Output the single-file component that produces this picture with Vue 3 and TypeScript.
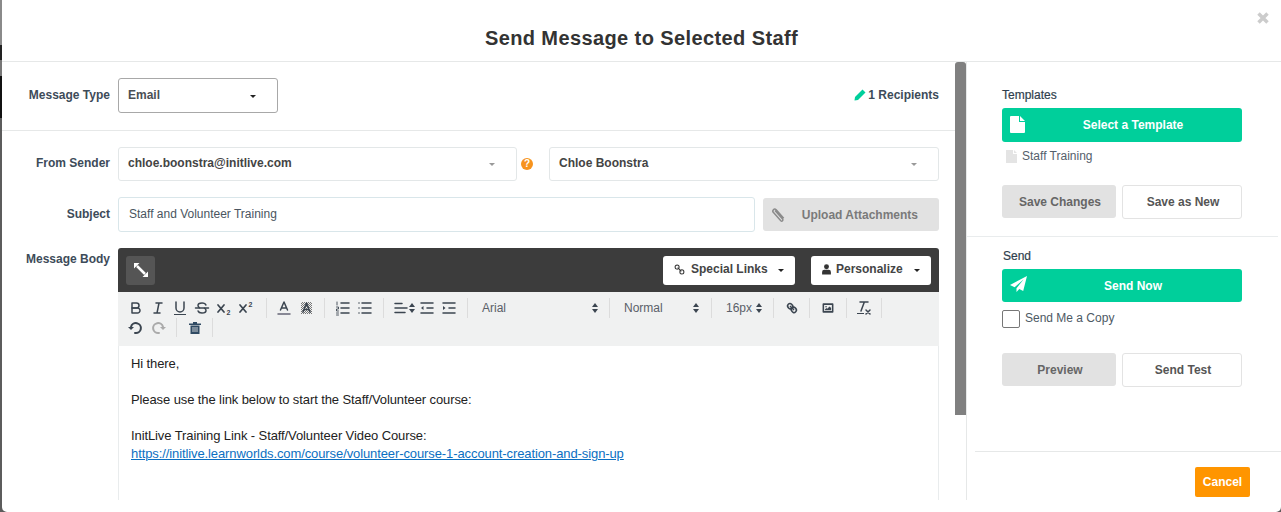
<script setup lang="ts">
const title = 'Send Message to Selected Staff'
const link = 'https://initlive.learnworlds.com/course/volunteer-course-1-account-creation-and-sign-up'
</script>

<template>
  <div class="page">
    <div class="modal">
      <header class="head">
        <h1>{{ title }}</h1>
        <svg class="close" viewBox="0 0 12 12"><path d="M1.5 1.5l9 9M10.5 1.5l-9 9" /></svg>
      </header>
      <div class="main">
        <section class="left">
          <div class="type-row">
            <label class="lab">Message Type</label>
            <div class="sel type-sel"><span>Email</span><i class="caret dark"></i></div>
            <div class="recips">
              <svg viewBox="0 0 12 12" width="12" height="12"><path fill="#00cf9b" d="M8.500.5l3 3L4 11l-3.500.5L1 8z" /></svg>
              <span>1 Recipients</span>
            </div>
          </div>
          <div class="fields">
            <div class="row">
              <label class="lab">From Sender</label>
              <div class="sel from"><span>chloe.boonstra@initlive.com</span><i class="caret"></i></div>
              <span class="help">?</span>
              <div class="sel name"><span>Chloe Boonstra</span><i class="caret"></i></div>
            </div>
            <div class="row subj">
              <label class="lab">Subject</label>
              <div class="subject-input">Staff and Volunteer Training</div>
              <button class="upload">
                <svg viewBox="0 0 16 16" width="16" height="16"><path d="M4 3.500l7.600 8.600c1 1.200-.6 2.800-1.800 1.700L2.500 5.600C.6 3.400 3.200.9 5.200 2.800l7.500 8.400" fill="none" stroke="#8b8b8b" stroke-width="1.500" /></svg>
                <span>Upload Attachments</span>
              </button>
            </div>
            <div class="row body-row">
              <label class="lab">Message Body</label>
              <div class="editor">
                <div class="darkbar">
                  <button class="expand">
                    <svg viewBox="0 0 16 16" width="16" height="16"><path d="M4 4l8 8" stroke="#fff" stroke-width="2.500" /><path d="M1 1h5.500L1 6.500zM15 15H9.500L15 9.500z" fill="#fff" /></svg>
                  </button>
                  <span class="grow"></span>
                  <button class="pill links">
                    <svg viewBox="0 0 12 12" width="11" height="11"><g fill="none" stroke="#333" stroke-width="1.100"><circle cx="3.400" cy="3.400" r="2.200" /><circle cx="8.600" cy="8.600" r="2.200" /><path d="M4 4l4 4" /></g></svg>
                    <span>Special Links</span><i class="caret dark"></i>
                  </button>
                  <button class="pill person">
                    <svg viewBox="0 0 12 12" width="11" height="11"><circle cx="6" cy="3" r="2.700" fill="#333" /><path d="M1.200 11.500V8.600Q1.200 6.200 3.600 6.200h4.800q2.400 0 2.400 2.400v2.900z" fill="#333" /></svg>
                    <span>Personalize</span><i class="caret dark"></i>
                  </button>
                </div>
                <div class="toolbar">
                  <div class="tb-row r1">
                    <div class="grp g1">
                      <span class="b"><svg viewBox="0 0 18 18"><path class="st" d="M5,4H9.500A2.500,2.500,0,0,1,12,6.500v0A2.500,2.500,0,0,1,9.500,9H5V4Z" /><path class="st" d="M5,9h5.500A2.500,2.500,0,0,1,13,11.500v0A2.500,2.500,0,0,1,10.500,14H5V9Z" /></svg></span>
                      <span class="b"><svg viewBox="0 0 18 18"><path class="st" d="M7 4h6M5 14h6M8 14l2-10" /></svg></span>
                      <span class="b"><svg viewBox="0 0 18 18"><path class="st" d="M5,3V9a4,4,0,0,0,8,0V3" /><rect class="fl" height="1" width="12" x="3" y="15" /></svg></span>
                      <span class="b"><svg viewBox="0 0 18 18"><path class="st" d="M15.500 9h-13" /><path class="st" d="M12.900 6C12.500 4.800 11 4 9 4 6.800 4 5 5 5 6.500c0 1 .6 1.700 1.500 2.300M5.100 12c.4 1.200 1.900 2 3.900 2 2.200 0 4-1 4-2.500 0-1-.6-1.700-1.500-2.300" /></svg></span>
                      <span class="b"><svg viewBox="0 0 18 18"><path class="st x" d="M3 6l6 7M9 6l-6 7" /><text x="11.500" y="15.500" class="sc">2</text></svg></span>
                      <span class="b"><svg viewBox="0 0 18 18"><path class="st x" d="M3 6l6 7M9 6l-6 7" /><text x="11.500" y="8" class="sc">2</text></svg></span>
                    </div>
                    <div class="grp g2">
                      <span class="b"><svg viewBox="0 0 18 18"><path class="st" d="M5.500 11L9 3l3.500 8M6.400 9h5.200" /><path class="st und" d="M3 15h12" /></svg></span>
                      <span class="b"><svg viewBox="0 0 18 18"><defs><pattern id="hatch" width="2" height="2" patternUnits="userSpaceOnUse"><rect width="1" height="1" fill="#777" /><rect x="1" y="1" width="1" height="1" fill="#777" /></pattern></defs><rect x="4" y="3" width="11" height="12" fill="url(#hatch)" /><path class="st" d="M6 13l3.500-9 3.500 9M7 10.500h5" /></svg></span>
                    </div>
                    <div class="grp g3">
                      <span class="b"><svg viewBox="0 0 18 18"><path class="st" d="M7 4h8M7 9h8M7 14h8" /><path class="st thin" d="M3 3v3M2.500 8h2v2h-2v2h2M2.500 14h2M2.500 16h2" /></svg></span>
                      <span class="b"><svg viewBox="0 0 18 18"><path class="st" d="M6 4h9M6 9h9M6 14h9M3 4h.01M3 9h.01M3 14h.01" /></svg></span>
                    </div>
                    <div class="grp g4">
                      <span class="al"><svg viewBox="0 0 14 18" width="14" height="18"><path class="st" d="M1 4.500h7M1 9h12M1 13.500h10" /></svg><svg class="updown" viewBox="0 0 6 10"><path d="M3 0l3 4H0zM3 10L0 6h6z" /></svg></span>
                      <span class="b"><svg viewBox="0 0 18 18"><path class="st" d="M3 14h12M3 4h12M9 9h6" /><path class="fl" d="M5.500 7v4L3 9z" /></svg></span>
                      <span class="b"><svg viewBox="0 0 18 18"><path class="st" d="M3 14h12M3 4h12M9 9h6" /><path class="fl" d="M3 7v4l2.500-2z" /></svg></span>
                    </div>
                    <div class="grp g5 drop"><span>Arial</span><svg class="updown" viewBox="0 0 6 10"><path d="M3 0l3 4H0zM3 10L0 6h6z" /></svg></div>
                    <div class="grp g6 drop"><span>Normal</span><svg class="updown" viewBox="0 0 6 10"><path d="M3 0l3 4H0zM3 10L0 6h6z" /></svg></div>
                    <div class="grp g7 drop"><span>16px</span><svg class="updown" viewBox="0 0 6 10"><path d="M3 0l3 4H0zM3 10L0 6h6z" /></svg></div>
                    <div class="grp g8">
                      <span class="b small"><svg viewBox="0 0 18 18"><path class="st heavy" d="M7 7l4 4" /><path class="st heavy" d="M8.900,4.577a3.476,3.476,0,0,1,.36,4.679A3.476,3.476,0,0,1,4.577,8.900C3.185,7.500,2.035,6.400,4.217,4.217S7.500,3.185,8.900,4.577Z" /><path class="st heavy" d="M13.423,9.100a3.476,3.476,0,0,0-4.679-.36,3.476,3.476,0,0,0,.36,4.679c1.392,1.392,2.500,2.542,4.679.36S14.815,10.500,13.423,9.100Z" /></svg></span>
                    </div>
                    <div class="grp g9">
                      <span class="b small"><svg viewBox="0 0 18 18"><rect class="st heavy" height="10" width="12" x="3" y="4" /><circle class="fl" cx="6.500" cy="7.500" r="1" /><path class="fl" d="M5 12v-1l2-2 1 1 3-3 2 2v3z" /></svg></span>
                    </div>
                    <div class="grp g10">
                      <span class="b"><svg viewBox="0 0 18 18"><path class="st" d="M5 3h8M6 12l3.350-9M11 11l4 4M15 11l-4 4" /><rect class="fl" height="1" width="7" x="2" y="14" /></svg></span>
                    </div>
                  </div>
                  <div class="tb-row r2">
                    <div class="grp g11">
                      <span class="b"><svg viewBox="0 0 18 18"><path class="fl" d="M7 10L4 13 1 10z" transform="translate(0 -2)" /><path class="st heavy" d="M8 14a5 5 0 1 0-4-6" /></svg></span>
                      <span class="b off"><svg viewBox="0 0 18 18"><path class="fl" d="M11 8l3 3 3-3z" /><path class="st heavy" d="M10 14a5 5 0 1 1 4-6" /></svg></span>
                    </div>
                    <div class="grp g12">
                      <span class="b"><svg viewBox="0 0 18 18"><path d="M3 4.500h12v1.500H3zM7 3h4v1.500H7zM4.500 6.500h9V15h-9z" fill="#2f4a63" /><path d="M7 8v5M9 8v5M11 8v5" stroke="#efefef" stroke-width=".8" /></svg></span>
                    </div>
                  </div>
                </div>
                <div class="content">
                  <p>Hi there,</p>
                  <p><br /></p>
                  <p>Please use the link below to start the Staff/Volunteer course:</p>
                  <p><br /></p>
                  <p>InitLive Training Link - Staff/Volunteer Video Course:</p>
                  <p><a href="#">{{ link }}</a></p>
                </div>
              </div>
            </div>
          </div>
        </section>
        <div class="rail"><div class="thumb"></div></div>
        <aside class="right">
          <div class="block tpl">
            <h2>Templates</h2>
            <button class="green">
              <svg class="ficon" viewBox="0 0 15 17" width="15" height="17"><path d="M0 1q0-1 1-1h8v6h6v10q0 1-1 1H1q-1 0-1-1z M10 0l5 5h-5z" fill="#fff" /></svg>
              <span>Select a Template</span>
            </button>
            <div class="tpl-item">
              <svg viewBox="0 0 11 13" width="11" height="13"><path d="M0 0h7v4h4v9H0zM8 0l3 3H8z" fill="#e4e4e4" /></svg>
              <span>Staff Training</span>
            </div>
            <div class="btns">
              <button class="grey">Save Changes</button>
              <button class="ghost">Save as New</button>
            </div>
          </div>
          <div class="block send">
            <h2>Send</h2>
            <button class="green">
              <svg class="ficon plane" viewBox="0 0 17 16" width="17" height="16"><path d="M17 0L0 9l4.600 2.200L13.500 3.500 6.500 12.200V16l2.800-3 3.900 1.900z" fill="#fff" /></svg>
              <span>Send Now</span>
            </button>
            <div class="check"><span class="box"></span><span class="check-text">Send Me a Copy</span></div>
            <div class="btns">
              <button class="grey">Preview</button>
              <button class="ghost">Send Test</button>
            </div>
          </div>
          <footer class="foot"><button class="cancel">Cancel</button></footer>
        </aside>
      </div>
    </div>
  </div>
</template>

<style scoped>
.page {
  width: 1281px;
  height: 512px;
  overflow: hidden;
  padding-left: 2px;
  box-sizing: border-box;
  font-family: "Liberation Sans", Arial, sans-serif;
  background: linear-gradient(to bottom, #8a8a8a 0 45px, #222 45px 60px, #777 60px 76px, #111 76px 118px, #5c5c5c 118px 512px);
}
.modal {
  height: 512px;
  background: #fff;
  border-radius: 0 0 5px 5px;
  display: flex;
  flex-direction: column;
  overflow: hidden;
}
.head {
  height: 62px;
  box-sizing: border-box;
  flex: none;
  border-bottom: 1px solid #e6e8e8;
  display: flex;
  align-items: center;
  justify-content: center;
  position: relative;
}
h1 {
  margin: 15px 0 0 0;
  font-size: 20px;
  line-height: 24px;
  font-weight: 700;
  color: #333;
  letter-spacing: 0.4px;
}
.close {
  position: absolute;
  right: 12px;
  top: 12px;
  width: 12px;
  height: 12px;
  fill: none;
  stroke: #ccc;
  stroke-width: 3.5;
}
.main {
  flex: 1;
  display: flex;
  min-height: 0;
}
.left {
  width: 953px;
  height: 438px;
  flex: none;
  overflow: hidden;
}
.type-row {
  height: 69px;
  display: flex;
  align-items: center;
  border-bottom: 1px solid #e6e8e8;
  padding: 0 16px 2px 0;
  box-sizing: border-box;
}
.lab {
  width: 108px;
  margin-right: 8px;
  flex: none;
  text-align: right;
  font-size: 12px;
  font-weight: 700;
  color: #3d4b59;
}
.sel {
  height: 34px;
  box-sizing: border-box;
  border: 1px solid #e3e7e8;
  border-radius: 3px;
  display: flex;
  align-items: center;
  justify-content: space-between;
  padding: 0 21px 2px 9px;
  font-size: 12px;
  font-weight: 700;
  color: #444;
}
.type-sel {
  width: 160px;
  height: 35px;
  border-color: #a8a8a8;
  padding-bottom: 0;
  color: #4a4f55;
}
.recips {
  margin-left: auto;
  display: flex;
  align-items: center;
  gap: 2px;
  font-size: 12px;
  font-weight: 700;
  color: #3d4b59;
}
.caret {
  width: 0;
  height: 0;
  border-left: 3.5px solid transparent;
  border-right: 3.5px solid transparent;
  border-top: 3.5px solid #999;
  margin-top: 2px;
}
.caret.dark {
  border-top-color: #222;
}
.fields {
  padding: 16px 14px 0 0;
}
.row {
  display: flex;
  align-items: center;
}
.row > .lab {
  padding-bottom: 2px;
}
.from {
  width: 399px;
}
.help {
  width: 12px;
  height: 12px;
  border-radius: 50%;
  background: #f7931e;
  color: #fff;
  font-size: 10px;
  font-weight: 700;
  line-height: 12px;
  text-align: center;
  margin: 0 16px 0 4px;
}
.name {
  width: 390px;
}
.subj {
  margin-top: 16px;
}
.subject-input {
  width: 637px;
  height: 35px;
  box-sizing: border-box;
  border: 1px solid #d9e6ea;
  border-radius: 3px;
  padding: 0 10px 2px;
  display: flex;
  align-items: center;
  font-size: 12px;
  color: #4a5560;
}
.upload {
  width: 176px;
  height: 33px;
  margin-left: 8px;
  border: none;
  border-radius: 3px;
  background: #e2e2e2;
  color: #7a7a7a;
  font: 700 12px "Liberation Sans", Arial, sans-serif;
  display: flex;
  align-items: center;
  padding: 0 21px 0 8px;
  justify-content: space-between;
}
.body-row {
  margin-top: 16px;
  align-items: flex-start;
}
.body-row .lab {
  margin-top: 4px;
}
.editor {
  width: 821px;
  flex: none;
}
.darkbar {
  height: 44px;
  background: #3c3c3c;
  border-radius: 3px 3px 0 0;
  display: flex;
  align-items: center;
  padding: 0 8px;
  box-sizing: border-box;
}
.grow {
  flex: 1;
}
.expand {
  width: 29px;
  height: 29px;
  border: none;
  border-radius: 3px;
  background: #555;
  padding: 0;
  display: flex;
  align-items: center;
  justify-content: center;
}
.pill {
  height: 29px;
  border: none;
  border-radius: 3px;
  background: #fff;
  color: #444;
  font: 700 12px "Liberation Sans", Arial, sans-serif;
  display: flex;
  align-items: center;
}
.links {
  width: 132px;
  margin-right: 16px;
  padding: 0 0 2px 11px;
  gap: 6px;
}
.links .caret {
  margin-left: 4px;
}
.person {
  width: 120px;
  padding: 0 0 2px 10px;
  gap: 4px;
}
.person .caret {
  margin-left: 7px;
}
.toolbar {
  height: 54px;
  background: #f0f1f1;
  box-sizing: border-box;
  padding: 6px 0 0 7px;
}
.tb-row {
  display: flex;
}
.r1 {
  height: 20px;
}
.r2 {
  height: 19px;
}
.grp {
  box-sizing: border-box;
  border-right: 1px solid #dcdcdc;
  display: flex;
  align-items: center;
  padding: 0 6px;
  height: 100%;
}
.b {
  width: 22px;
  height: 18px;
  display: flex;
  justify-content: center;
  align-items: center;
  flex: none;
}
.b svg {
  width: 18px;
  height: 18px;
}
.b.small svg {
  width: 14px;
  height: 14px;
}
.st {
  fill: none;
  stroke: #3b4550;
  stroke-width: 1.5;
  stroke-linecap: round;
  stroke-linejoin: round;
}
.st.heavy {
  stroke-width: 2;
}
.st.thin {
  stroke-width: 0.9;
}
.st.x {
  stroke-width: 1.7;
}
.st.und {
  stroke: #667;
}
.fl {
  fill: #3b4550;
}
.off .st {
  stroke: #aaa;
}
.off .fl {
  fill: #aaa;
}
.sc {
  font-size: 7px;
  font-weight: 700;
  fill: #3b4550;
}
.g1 {
  width: 142px;
  padding: 0;
}
.g2 {
  width: 58px;
}
.g3 {
  width: 59px;
  padding-left: 7px;
}
.g4 {
  width: 84px;
  padding: 0 0 0 5px;
}
.al {
  width: 27px;
  display: flex;
  align-items: center;
  gap: 1px;
  flex: none;
}
.al svg:first-child {
  margin-left: 5px;
  flex: none;
}
.updown {
  width: 6px;
  height: 10px;
  fill: #3b4550;
  flex: none;
}
.drop {
  font-size: 12px;
  color: #5a6068;
  justify-content: space-between;
}
.g5 {
  width: 142px;
  padding: 0 11px 0 14px;
}
.g6 {
  width: 102px;
  padding: 0 12px 0 14px;
}
.g7 {
  width: 62px;
  padding: 0 11px 0 14px;
}
.g8,
.g9,
.g10 {
  padding: 0;
  justify-content: center;
}
.g8 {
  width: 36px;
}
.g9 {
  width: 37px;
}
.g10 {
  width: 35px;
}
.g11 {
  width: 52px;
  padding: 0;
}
.g12 {
  width: 36px;
  padding: 0;
  justify-content: center;
}
.content {
  height: 154px;
  border-left: 1px solid #e9eced;
  border-right: 1px solid #e9eced;
  padding: 9px 12px;
  box-sizing: border-box;
  font-size: 13px;
  letter-spacing: -0.1px;
  line-height: 18px;
  color: #222;
}
.content p {
  margin: 0;
}
.content a {
  color: #0b6fc2;
}
.rail {
  width: 12px;
  height: 438px;
  flex: none;
  border-right: 1px solid #e6e8e8;
  box-sizing: border-box;
}
.thumb {
  width: 11px;
  height: 353px;
  background: #808080;
  border-radius: 3px 3px 0 0;
}
.right {
  flex: 1;
  display: flex;
  flex-direction: column;
  color: #3d4b59;
}
.block {
  padding: 0 39px 0 35px;
}
.tpl {
  height: 175px;
  border-bottom: 1px solid #e9eced;
  padding-top: 26px;
  box-sizing: border-box;
  margin-right: 3px;
  padding-right: 36px;
}
h2 {
  margin: 0;
  font-size: 12px;
  line-height: 14px;
  font-weight: 400;
  color: #2f3e4d;
  -webkit-text-stroke: 0.2px #2f3e4d;
}
.green {
  width: 240px;
  height: 34px;
  margin-top: 6px;
  border: none;
  border-radius: 3px;
  background: #00cf9b;
  color: #fff;
  font: 700 12px "Liberation Sans", Arial, sans-serif;
  position: relative;
  padding: 0 0 0 22px;
}
.send .green {
  height: 33px;
}
.ficon {
  position: absolute;
  left: 8px;
  top: 8px;
}
.plane {
  top: 7px;
}
.tpl-item {
  display: flex;
  align-items: center;
  gap: 5px;
  margin: 7px 0 0 4px;
  font-size: 12px;
  line-height: 14px;
  color: #55606b;
}
.btns {
  display: flex;
  gap: 6px;
  align-items: flex-start;
}
.tpl .btns {
  margin-top: 22px;
}
.grey {
  width: 114px;
  height: 33px;
  border: none;
  border-radius: 3px;
  background: #e2e2e2;
  color: #666;
  font: 700 12px "Liberation Sans", Arial, sans-serif;
  padding: 0 0 0 2px;
}
.ghost {
  width: 120px;
  height: 34px;
  border: 1px solid #e3e3e3;
  border-radius: 3px;
  background: #fff;
  color: #555;
  font: 700 12px "Liberation Sans", Arial, sans-serif;
  padding: 0 0 1px 2px;
}
.send {
  padding-top: 12px;
  height: 215px;
  box-sizing: border-box;
  border-bottom: 1px solid #e6e8e8;
  margin-left: 8px;
  padding-left: 27px;
}
.send h2 {
  margin-left: 1px;
  font-size: 12px;
}
.check {
  display: flex;
  align-items: center;
  gap: 5px;
  margin-top: 8px;
  font-size: 12px;
  color: #4d5964;
}
.check-text {
  padding-bottom: 2px;
}
.box {
  width: 18px;
  height: 18px;
  box-sizing: border-box;
  border: 1px solid #777;
  border-radius: 2px;
}
.send .btns {
  margin-top: 25px;
}
.foot {
  padding: 15px 31px 0 0;
  display: flex;
  justify-content: flex-end;
}
.cancel {
  width: 55px;
  height: 30px;
  border: none;
  border-radius: 2px;
  background: #ff9500;
  color: #fff;
  font: 700 12px "Liberation Sans", Arial, sans-serif;
  padding: 0;
}
</style>
